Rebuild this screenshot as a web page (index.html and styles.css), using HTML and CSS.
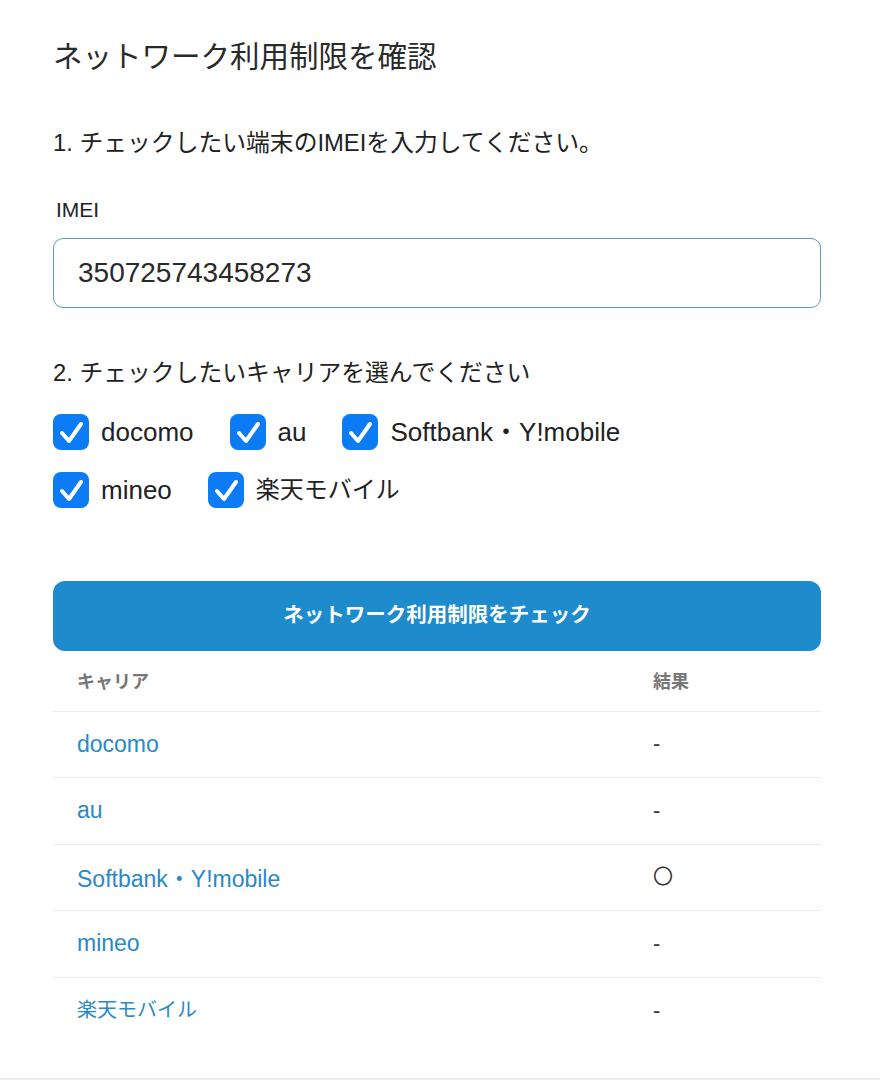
FILE: index.html
```html
<!DOCTYPE html>
<html lang="ja">
<head>
    <meta charset="UTF-8">
    <meta name="viewport" content="width=device-width, initial-scale=1.0">
    <title>ネットワーク利用制限を確認</title>
    <link rel="stylesheet" href="styles.css">
</head>
<body>
    <div class="page">
        <h1 class="title">ネットワーク利用制限を確認</h1>

        <p class="step">1. チェックしたい端末のIMEIを入力してください。</p>
        <label class="field-label" for="imei">IMEI</label>
        <input class="imei-input" id="imei" type="text" value="350725743458273">

        <p class="step step-2">2. チェックしたいキャリアを選んでください</p>
        <div class="carriers">
            <div class="carrier-row">
                <label class="check"><span class="box"><svg viewBox="0 0 36 36"><path d="M9 19 L16 27 L28 10"/></svg></span>docomo</label>
                <label class="check"><span class="box"><svg viewBox="0 0 36 36"><path d="M9 19 L16 27 L28 10"/></svg></span>au</label>
                <label class="check"><span class="box"><svg viewBox="0 0 36 36"><path d="M9 19 L16 27 L28 10"/></svg></span>Softbank・Y!mobile</label>
            </div>
            <div class="carrier-row">
                <label class="check"><span class="box"><svg viewBox="0 0 36 36"><path d="M9 19 L16 27 L28 10"/></svg></span>mineo</label>
                <label class="check jp"><span class="box"><svg viewBox="0 0 36 36"><path d="M9 19 L16 27 L28 10"/></svg></span>楽天モバイル</label>
            </div>
        </div>

        <button class="check-btn">ネットワーク利用制限をチェック</button>

        <table class="results">
            <thead>
                <tr>
                    <th class="col-carrier">キャリア</th>
                    <th>結果</th>
                </tr>
            </thead>
            <tbody>
                <tr><td><a href="#">docomo</a></td><td>-</td></tr>
                <tr><td><a href="#">au</a></td><td>-</td></tr>
                <tr><td><a href="#">Softbank・Y!mobile</a></td><td class="mark">〇</td></tr>
                <tr><td><a href="#">mineo</a></td><td>-</td></tr>
                <tr><td><a href="#" class="jp">楽天モバイル</a></td><td>-</td></tr>
            </tbody>
        </table>
    </div>
    <div class="bottom-bar"></div>
</body>
</html>
```

FILE: styles.css
```css
* {
    margin: 0;
    padding: 0;
    box-sizing: border-box;
}

body {
    background: #ffffff;
    color: #222;
    font-family: 'Liberation Sans', 'Noto Sans CJK JP', sans-serif;
}

.page {
    padding: 34px 59px 0 53px;
}

.title {
    font-size: 29.5px;
    font-weight: normal;
    line-height: 45px;
    color: #2a2a2a;
}

.step {
    font-size: 23.8px;
    line-height: 36px;
    margin-top: 46px;
}

.step-2 {
    margin-top: 47px;
}

.field-label {
    display: block;
    font-size: 21px;
    line-height: 30px;
    margin-top: 34px;
    padding-left: 3px;
}

.imei-input {
    display: block;
    width: 100%;
    height: 70px;
    margin-top: 13px;
    padding: 0 24px;
    border: 1.5px solid #5b9bc4;
    border-radius: 10px;
    font-family: inherit;
    font-size: 28px;
    color: #2a2a2a;
    outline: none;
}

.carriers {
    margin-top: 23px;
    display: flex;
    flex-direction: column;
    gap: 22px;
}

.carrier-row {
    display: flex;
    gap: 36px;
}

.check {
    display: flex;
    align-items: center;
    gap: 12px;
    font-size: 26px;
    line-height: 36px;
}

.check.jp {
    font-size: 24px;
}

.box {
    width: 36px;
    height: 36px;
    border-radius: 8px;
    background: #0b7bf6;
    display: flex;
}

.box svg {
    width: 36px;
    height: 36px;
}

.box path {
    fill: none;
    stroke: #fff;
    stroke-width: 4;
    stroke-linecap: round;
    stroke-linejoin: round;
}

.check-btn {
    display: block;
    width: 100%;
    height: 70px;
    margin-top: 73px;
    padding-bottom: 6px;
    border: none;
    border-radius: 12px;
    background: #1e8bcd;
    color: #fff;
    font-family: inherit;
    font-size: 20.5px;
    font-weight: bold;
}

.results {
    width: 100%;
    border-collapse: collapse;
}

.results th {
    height: 60px;
    text-align: left;
    font-size: 18px;
    font-weight: bold;
    color: #777;
    padding: 0 24px 2px;
}

.results .col-carrier {
    width: 75%;
}

.results td {
    height: 66.5px;
    border-top: 1px solid #ececec;
    padding: 0 24px;
    font-size: 22px;
    color: #333;
}

.results td.mark {
    font-size: 20px;
    padding-bottom: 4px;
}

.results a {
    color: #2a89c6;
    text-decoration: none;
    font-size: 23px;
}

.results a.jp {
    font-size: 20px;
    position: relative;
    top: -2px;
}

.bottom-bar {
    margin-top: 34px;
    border-top: 2px solid #eeeeee;
    height: 10px;
}
```
